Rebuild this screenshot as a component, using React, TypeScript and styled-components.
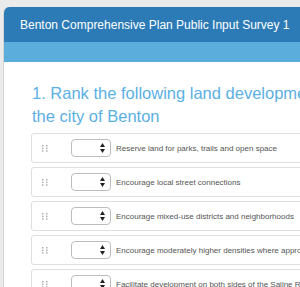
import styled, { createGlobalStyle } from "styled-components";

const GlobalStyle = createGlobalStyle`
  html, body {
    margin: 0;
    padding: 0;
    background-color: #ebebeb;
    overflow: hidden;
  }
  body {
    font-family: "Liberation Sans", Arial, sans-serif;
  }
`;

const items = [
  "Reserve land for parks, trails and open space",
  "Encourage local street connections",
  "Encourage mixed-use districts and neighborhoods",
  "Encourage moderately higher densities where appropriate",
  "Facilitate development on both sides of the Saline River",
];

const DragHandle = () => (
  <HandleIcon width="6" height="7" viewBox="0 0 6 7">
    {[0, 1, 2].map((r) =>
      [0, 1].map((c) => (
        <rect
          key={`${r}-${c}`}
          x={c * 4}
          y={r * 2.6}
          width="1.5"
          height="1.5"
          fill="#b0b0b0"
        />
      ))
    )}
  </HandleIcon>
);

const App = () => {
  return (
    <>
      <GlobalStyle />
      <Page>
        <Card>
          <Header>Benton Comprehensive Plan Public Input Survey 1</Header>
          <SubBar />
          <Body>
            <Question>
              1. Rank the following land development priorities for the city of Benton
            </Question>
            <List>
              {items.map((item) => (
                <Row key={item}>
                  <DragHandle />
                  <RankSelect>
                    <Spinner width="5" height="10" viewBox="0 0 5 10">
                      <path d="M2.5 0 L5 4 L0 4 Z" fill="#222" />
                      <path d="M0 6 L5 6 L2.5 10 Z" fill="#222" />
                    </Spinner>
                  </RankSelect>
                  <Label>{item}</Label>
                </Row>
              ))}
            </List>
          </Body>
        </Card>
      </Page>
    </>
  );
};

const Page = styled.div`
  padding: 7px 0 0 3px;
`;

const Card = styled.div`
  width: 760px;
  min-height: 300px;
  background-color: #ffffff;
  border-radius: 6px 6px 0 0;
  border-left: 1px solid #d4d4d4;
  overflow: hidden;
`;

const Header = styled.div`
  height: 35px;
  background-color: #2c7bb6;
  color: #ffffff;
  font-size: 12px;
  display: flex;
  align-items: center;
  padding-left: 16px;
  white-space: nowrap;
`;

const SubBar = styled.div`
  height: 20px;
  background-color: #5baedb;
`;

const Body = styled.div`
  padding: 20px 0 0 27px;
`;

const Question = styled.h2`
  width: 385px;
  margin: 0 0 5px 1px;
  font-size: 16.5px;
  font-weight: normal;
  line-height: 23px;
  color: #5bb0e4;
`;

const List = styled.div`
  display: flex;
  flex-direction: column;
  gap: 4px;
`;

const Row = styled.div`
  height: 28px;
  border: 1px solid #dfdfdf;
  border-radius: 3px;
  display: flex;
  align-items: center;
  padding-left: 10px;
`;

const HandleIcon = styled.svg`
  flex-shrink: 0;
`;

const RankSelect = styled.div`
  box-sizing: content-box;
  width: 33px;
  height: 16px;
  margin-left: 23px;
  padding-right: 5px;
  border: 1px solid #bdbdbd;
  border-radius: 4px;
  display: flex;
  align-items: center;
  justify-content: flex-end;
  flex-shrink: 0;
`;

const Spinner = styled.svg`
  display: block;
`;

const Label = styled.span`
  margin-left: 5px;
  font-size: 8px;
  color: #555555;
  white-space: nowrap;
`;

export default App;
